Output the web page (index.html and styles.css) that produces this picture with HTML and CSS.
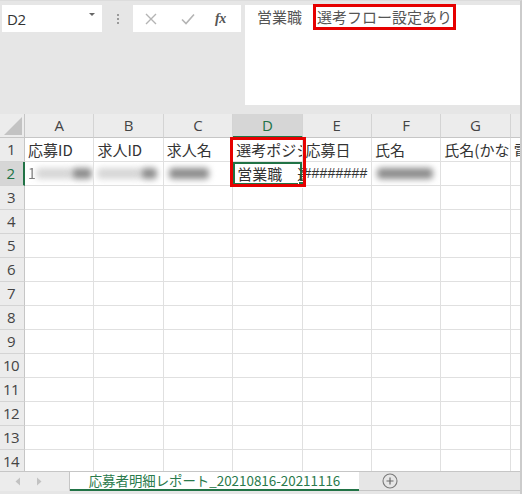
FILE: index.html
```html
<!DOCTYPE html>
<html lang="ja">
<head>
<meta charset="utf-8">
<title>Excel</title>
<link rel="stylesheet" href="styles.css">
</head>
<body>
<div class="app">
  <div class="topbar">
    <div class="namebox"><span class="name">D2</span><span class="caret"></span></div>
    <div class="grip"><i></i><i></i><i></i></div>
    <div class="fxbox">
      <svg class="ico" width="14" height="14" viewBox="0 0 14 14"><path d="M2 2 L12 12 M12 2 L2 12" stroke="#b4b4b4" stroke-width="1.4" fill="none"/></svg>
      <svg class="ico" width="16" height="14" viewBox="0 0 16 14"><path d="M2 7.5 L6 11.5 L14 2.5" stroke="#b4b4b4" stroke-width="1.6" fill="none"/></svg>
      <span class="fx">fx</span>
    </div>
    <div class="formula">営業職<span class="mark">選考フロー設定あり</span></div>
  </div>

  <div class="sheet">
    <div class="corner"><svg width="18" height="18" viewBox="0 0 18 18"><path d="M18 0 L18 18 L0 18 Z" fill="#c3c3c3"/></svg></div>
    <div class="ch">A</div><div class="ch">B</div><div class="ch">C</div><div class="ch sel">D</div><div class="ch">E</div><div class="ch">F</div><div class="ch">G</div><div class="ch"></div>

    <div class="rh">1</div><div class="c">応募ID</div><div class="c">求人ID</div><div class="c">求人名</div><div class="c">選考ポジション</div><div class="c">応募日</div><div class="c">氏名</div><div class="c">氏名(かな)</div><div class="c">電話番号</div>

    <div class="rh sel">2</div>
    <div class="c"><span class="one">1</span><span class="blur light w36"></span><span class="blur w20"></span></div>
    <div class="c"><span class="blur light w44"></span><span class="blur w16"></span></div>
    <div class="c"><span class="blur w40 ml4"></span></div>
    <div class="c active"><span class="txt">営業職　選考フロー設定あり</span></div>
    <div class="c hash">########</div>
    <div class="c"><span class="blur w56 ml2"></span></div>
    <div class="c"></div><div class="c"></div>

    <div class="rh">3</div><div class="c"></div><div class="c"></div><div class="c"></div><div class="c"></div><div class="c"></div><div class="c"></div><div class="c"></div><div class="c"></div>
    <div class="rh">4</div><div class="c"></div><div class="c"></div><div class="c"></div><div class="c"></div><div class="c"></div><div class="c"></div><div class="c"></div><div class="c"></div>
    <div class="rh">5</div><div class="c"></div><div class="c"></div><div class="c"></div><div class="c"></div><div class="c"></div><div class="c"></div><div class="c"></div><div class="c"></div>
    <div class="rh">6</div><div class="c"></div><div class="c"></div><div class="c"></div><div class="c"></div><div class="c"></div><div class="c"></div><div class="c"></div><div class="c"></div>
    <div class="rh">7</div><div class="c"></div><div class="c"></div><div class="c"></div><div class="c"></div><div class="c"></div><div class="c"></div><div class="c"></div><div class="c"></div>
    <div class="rh">8</div><div class="c"></div><div class="c"></div><div class="c"></div><div class="c"></div><div class="c"></div><div class="c"></div><div class="c"></div><div class="c"></div>
    <div class="rh">9</div><div class="c"></div><div class="c"></div><div class="c"></div><div class="c"></div><div class="c"></div><div class="c"></div><div class="c"></div><div class="c"></div>
    <div class="rh">10</div><div class="c"></div><div class="c"></div><div class="c"></div><div class="c"></div><div class="c"></div><div class="c"></div><div class="c"></div><div class="c"></div>
    <div class="rh">11</div><div class="c"></div><div class="c"></div><div class="c"></div><div class="c"></div><div class="c"></div><div class="c"></div><div class="c"></div><div class="c"></div>
    <div class="rh">12</div><div class="c"></div><div class="c"></div><div class="c"></div><div class="c"></div><div class="c"></div><div class="c"></div><div class="c"></div><div class="c"></div>
    <div class="rh">13</div><div class="c"></div><div class="c"></div><div class="c"></div><div class="c"></div><div class="c"></div><div class="c"></div><div class="c"></div><div class="c"></div>
    <div class="rh">14</div><div class="c"></div><div class="c"></div><div class="c"></div><div class="c"></div><div class="c"></div><div class="c"></div><div class="c"></div><div class="c"></div>

    <div class="redbox"></div>
  </div>

  <div class="tabs">
    <div class="nav">
      <svg width="6" height="9" viewBox="0 0 6 9"><path d="M5 0.5 L0.5 4.5 L5 8.5 Z" fill="#c2c2c2"/></svg>
      <svg width="6" height="9" viewBox="0 0 6 9"><path d="M1 0.5 L5.5 4.5 L1 8.5 Z" fill="#c2c2c2"/></svg>
    </div>
    <div class="tab">応募者明細レポート_20210816-20211116</div>
    <div class="add"><svg width="16" height="16" viewBox="0 0 16 16"><circle cx="8" cy="8" r="7" fill="none" stroke="#7a7a7a" stroke-width="1.1"/><path d="M8 4.5 V11.5 M4.5 8 H11.5" stroke="#6a6a6a" stroke-width="1.2"/></svg></div>
  </div>
</div>
</body>
</html>
```

FILE: styles.css
```css
* { box-sizing: border-box; }

html, body {
  margin: 0;
  padding: 0;
}

body {
  width: 522px;
  height: 494px;
  overflow: hidden;
  background: #e6e6e6;
  font-family: "Noto Sans CJK JP", "Noto Sans", sans-serif;
}

.app {
  width: 522px;
  height: 494px;
  display: flex;
  flex-direction: column;
  border-right: 2px solid #cbcbcb;
  border-top: 1px solid #dcdcdc;
}

/* ---------- top bar ---------- */
.topbar {
  height: 113px;
  flex: none;
  display: flex;
  align-items: flex-start;
  padding: 4px 0 0 2px;
}

.namebox {
  width: 100px;
  height: 27px;
  background: #fff;
  display: flex;
  align-items: center;
  justify-content: space-between;
  padding: 0 7px 0 5px;
}

.name {
  font-family: "Open Sans", "Noto Sans", sans-serif;
  font-size: 15px;
  color: #333;
  letter-spacing: -0.3px;
}

.caret {
  width: 0;
  height: 0;
  border-left: 3px solid transparent;
  border-right: 3px solid transparent;
  border-top: 3px solid #666;
  margin-top: -8px;
}

.grip {
  width: 31px;
  height: 27px;
  display: flex;
  flex-direction: column;
  align-items: center;
  justify-content: center;
  gap: 2px;
}

.grip i {
  width: 2px;
  height: 2px;
  background: #9a9a9a;
  display: block;
}

.fxbox {
  width: 108px;
  height: 27px;
  background: #fff;
  display: flex;
  align-items: center;
  padding: 0 0 0 11px;
  margin-right: 4px;
}

.fxbox .ico:nth-child(1) { margin-right: 22px; }
.fxbox .ico:nth-child(2) { margin-right: 19px; }

.fx {
  font-family: "Liberation Serif", "DejaVu Serif", serif;
  font-style: italic;
  font-weight: bold;
  font-size: 14px;
  color: #555;
  letter-spacing: -0.5px;
}

.formula {
  flex: 1;
  height: 100px;
  background: #fff;
  padding: 0 0 0 12px;
  font-size: 15px;
  line-height: 20px;
  color: #555;
  white-space: nowrap;
}

.mark {
  display: inline-block;
  margin-left: 11px;
  margin-top: -1px;
  border: 3px solid #e60000;
  padding: 0 1px 0 1px;
  line-height: 20px;
}

/* ---------- sheet ---------- */
.sheet {
  flex: 1;
  overflow: hidden;
  display: grid;
  grid-template-columns: 25px repeat(8, 69.4px);
  grid-auto-rows: 24px;
  background: #fff;
  position: relative;
}

.corner {
  background: #ececec;
  border-right: 1px solid #c6c6c6;
  border-bottom: 1px solid #c6c6c6;
  display: flex;
  align-items: flex-end;
  justify-content: flex-end;
  padding: 0 2px 2px 0;
}

.ch {
  background: #ececec;
  border-right: 1px solid #d4d4d4;
  border-bottom: 1px solid #c6c6c6;
  text-align: center;
  font-family: "Open Sans", "Noto Sans", sans-serif;
  font-size: 15px;
  line-height: 23px;
  color: #444;
}

.ch.sel {
  background: #d6d6d6;
  color: #217346;
  border-bottom: 2px solid #217346;
}

.rh {
  background: #ececec;
  border-right: 1px solid #c6c6c6;
  border-bottom: 1px solid #d4d4d4;
  text-align: center;
  font-family: "Open Sans", "Noto Sans", sans-serif;
  font-size: 15px;
  line-height: 23px;
  color: #444;
  padding-right: 2px;
  letter-spacing: -0.5px;
}

.rh.sel {
  background: #d6d6d6;
  color: #217346;
  border-right: 2px solid #217346;
}

.c {
  border-right: 1px solid #e0e0e0;
  border-bottom: 1px solid #e0e0e0;
  font-size: 15px;
  line-height: 23px;
  color: #333;
  padding-left: 3px;
  white-space: nowrap;
  overflow: hidden;
  display: flex;
  align-items: center;
}

.c.hash {
  font-family: "Liberation Sans", sans-serif;
  font-size: 14px;
  letter-spacing: 0.2px;
  padding-left: 1px;
}

.c.active {
  box-shadow: inset 0 0 0 2px #217346;
  padding-left: 4px;
  position: relative;
  overflow: visible;
  z-index: 1;
}

.c.active .txt {
  display: block;
  flex: 1;
  min-width: 0;
  overflow: hidden;
  margin-right: -1px;
}

.c.active::after {
  content: "";
  position: absolute;
  right: -3px;
  bottom: -3px;
  width: 5px;
  height: 5px;
  background: #217346;
  border: 1px solid #fff;
}

.one {
  color: #777;
  filter: blur(0.6px);
  font-size: 14px;
}

.blur {
  display: inline-block;
  height: 11px;
  background: #8c8c8c;
  border-radius: 4px;
  filter: blur(3px);
  flex: none;
}

.blur.light { background: #d6d6d6; }
.w16 { width: 16px; }
.w20 { width: 20px; }
.w36 { width: 36px; }
.w40 { width: 40px; }
.w44 { width: 44px; }
.w56 { width: 56px; }
.ml2 { margin-left: 2px; }
.ml4 { margin-left: 2px; }

/* annotation overlay spanning D1:D2 */
.redbox {
  position: absolute;
  grid-column: 5 / 6;
  grid-row: 2 / 4;
  top: -1px;
  bottom: -1px;
  left: -3px;
  right: -3px;
  border: 3px solid #e60000;
  z-index: 2;
}

/* ---------- sheet tabs ---------- */
.tabs {
  height: 23px;
  flex: none;
  display: flex;
  align-items: flex-start;
  border-top: 1px solid #c6c6c6;
  background: #e6e6e6;
  border-bottom: 3px solid #e6e6e6;
}

.nav {
  width: 70px;
  height: 19px;
  display: flex;
  align-items: center;
  gap: 15px;
  padding-left: 15px;
  border-right: 1px solid #c6c6c6;
  background: #ececec;
}

.tab {
  width: 289px;
  height: 19px;
  background: #fff;
  border-bottom: 2px solid #217346;
  color: #2a7a4c;
  font-size: 13.4px;
  line-height: 17px;
  text-align: center;
  white-space: nowrap;
}

.add {
  flex: 1;
  height: 19px;
  display: flex;
  align-items: center;
  padding-left: 23px;
  border-bottom: 1px solid #c6c6c6;
}
```
